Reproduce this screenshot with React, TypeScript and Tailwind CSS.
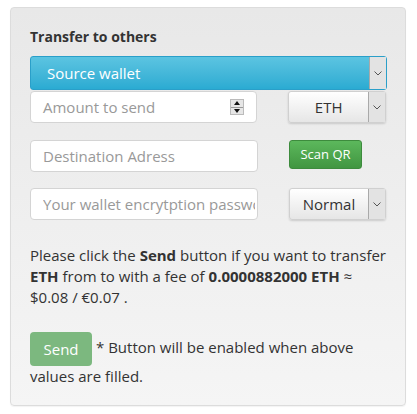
import React from "react";

const Chevron = () => (
  <svg width="8" height="5" viewBox="0 0 8 5" fill="none">
    <path d="M0.5 0.5 L4 4 L7.5 0.5" stroke="#555" strokeWidth="1" />
  </svg>
);

function SelectBox({ label, width }: { label: string; width: string }) {
  return (
    <div
      className={`flex h-[32px] ${width} rounded-[3px] border border-[#d0d0d0] bg-gradient-to-b from-[#ffffff] to-[#e6e6e6] shadow-[0_1px_2px_rgba(0,0,0,0.15)]`}
    >
      <div className="flex flex-1 items-center justify-center text-[15px] text-[#333]">{label}</div>
      <div className="flex w-[17px] items-center justify-center border-l border-[#a9a9a9] bg-[#e3e3e3]">
        <Chevron />
      </div>
    </div>
  );
}

export default function App() {
  return (
    <div className="h-[414px] w-[417px] bg-white pl-[10px] pt-[7px]" style={{ fontFamily: "'Open Sans', 'DejaVu Sans', sans-serif" }}>
      <div className="h-[399px] w-[396px] rounded-[4px] border border-[#dcdcdc] bg-gradient-to-b from-[#e8e8e8] to-[#f5f5f5] pl-[19px] pr-[19px] pt-[19px] shadow-[0_1px_1px_rgba(0,0,0,0.05)]">
        <div className="text-[14px] font-bold leading-[20px] text-[#333]">Transfer to others</div>
        <div className="mt-[9px] flex h-[34px] w-[357px] rounded-[3px] border border-[#2a9fc9] bg-gradient-to-b from-[#5bc4e1] to-[#2aabd2]">
          <div className="flex flex-1 items-center pl-[16px] text-[15px] text-white">Source wallet</div>
          <div className="flex w-[17px] items-center justify-center border-l border-[#a9a9a9] bg-[#e3e3e3]">
            <Chevron />
          </div>
        </div>
        <div className="mt-[1px] flex gap-[31px]">
          <div className="flex h-[32px] w-[228px] items-center rounded-[4px] border border-[#d4d4d4] bg-white pl-[12px] pr-[12px]">
            <span className="flex-1 text-[15px] text-[#999]">Amount to send</span>
            <div className="flex h-[16px] w-[14px] flex-col border border-[#bbb] bg-[#e6e6e6]">
              <div className="flex flex-1 items-center justify-center border-b border-[#999]">
                <svg width="6" height="4" viewBox="0 0 6 4"><path d="M0 4 L3 0 L6 4 Z" fill="#111" /></svg>
              </div>
              <div className="flex flex-1 items-center justify-center">
                <svg width="6" height="4" viewBox="0 0 6 4"><path d="M0 0 L3 4 L6 0 Z" fill="#111" /></svg>
              </div>
            </div>
          </div>
          <SelectBox label="ETH" width="w-[98px]" />
        </div>
        <div className="mt-[17px] flex gap-[31px]">
          <div className="flex h-[32px] w-[228px] items-center rounded-[4px] border border-[#d4d4d4] bg-white pl-[12px] text-[15px] text-[#999]">
            Destination Adress
          </div>
          <div className="flex h-[29px] w-[73px] items-center justify-center rounded-[3px] border border-[#3d8b3d] bg-gradient-to-b from-[#5cb85c] to-[#419641] text-[13px] text-white">
            Scan QR
          </div>
        </div>
        <div className="mt-[16px] flex gap-[31px]">
          <div className="flex h-[32px] w-[228px] items-center rounded-[4px] border border-[#d4d4d4] bg-white pl-[12px] pr-[2px] text-[15px] text-[#999]">
            <span className="block overflow-hidden whitespace-nowrap">Your wallet encrytption password</span>
          </div>
          <SelectBox label="Normal" width="w-[98px]" />
        </div>
        <p className="mt-[25px] text-[15px] leading-[21px] text-[#333]">
          Please click the <b>Send</b> button if you want to transfer <b>ETH</b> from to with a fee of{" "}
          <b>0.0000882000 ETH</b> ≈ $0.08 / €0.07 .
        </p>
        <div className="mt-[24px] text-[15px] leading-[21px] text-[#333]">
          <span className="mr-[4px] inline-flex h-[34px] w-[62px] items-center justify-center rounded-[4px] bg-[#7cb87f] align-middle text-white">
            Send
          </span>
          * Button will be enabled when above values are filled.
        </div>
      </div>
    </div>
  );
}
